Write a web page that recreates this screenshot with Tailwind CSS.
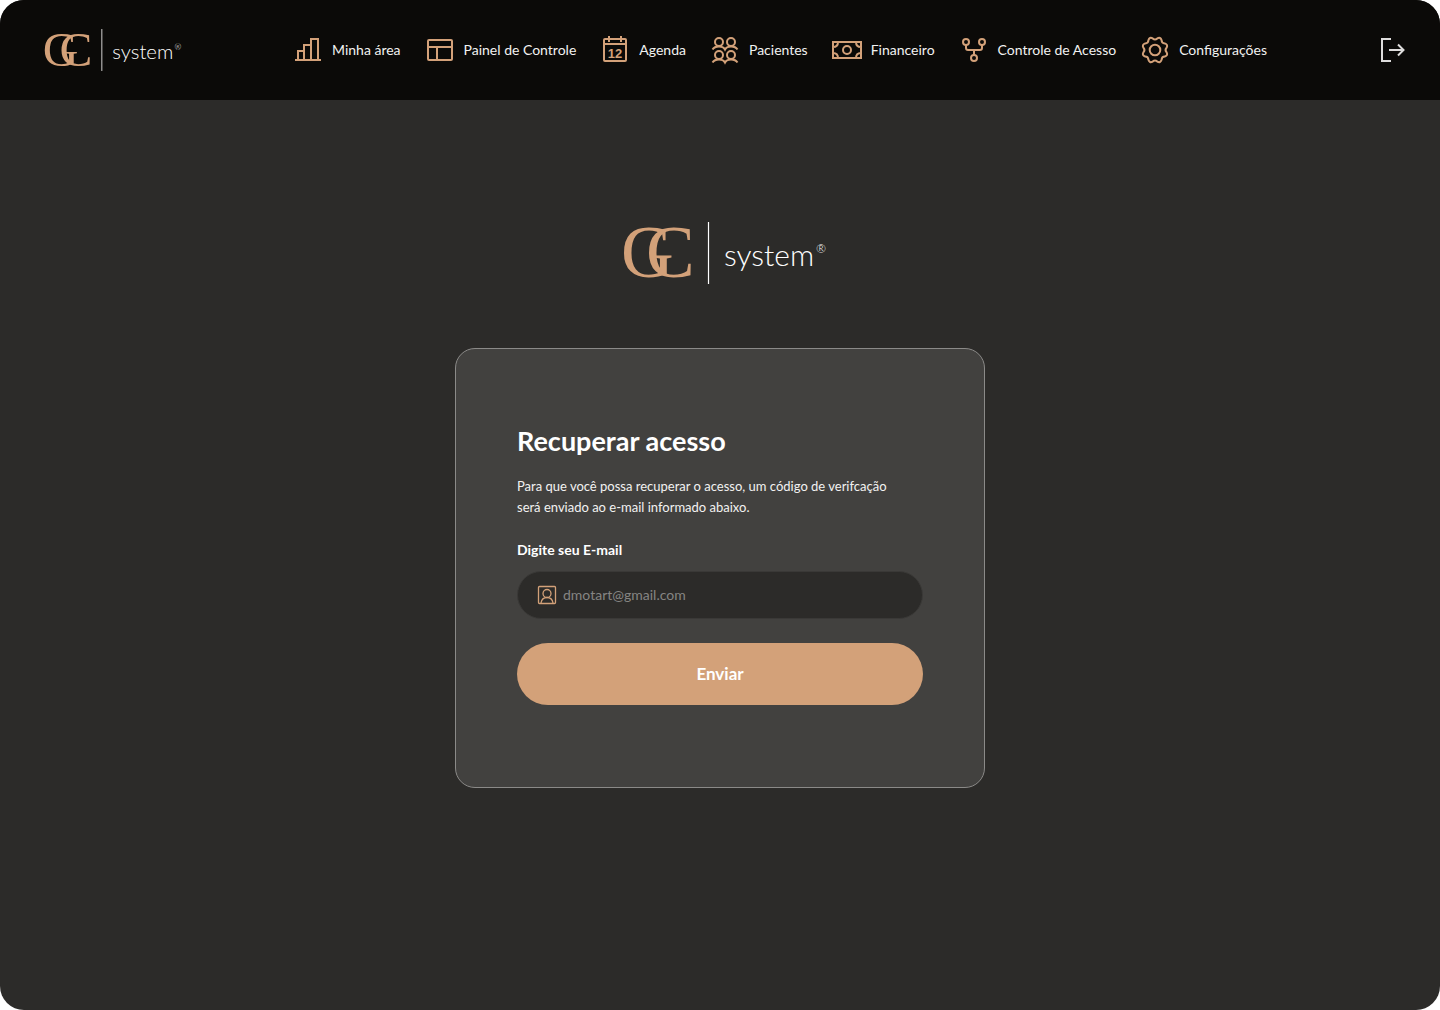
<!DOCTYPE html>
<html lang="pt-BR">
<head>
<meta charset="utf-8">
<meta name="viewport" content="width=device-width, initial-scale=1">
<title>GC system – Recuperar acesso</title>
<script src="https://cdn.jsdelivr.net/npm/@tailwindcss/browser@4"></script>
</head>
<body class="bg-white font-['Lato',sans-serif] text-white">
<svg class="hidden" aria-hidden="true">
  <symbol id="logo" viewBox="0 0 204 62">
    <g fill="#d3a179" font-family="Liberation Serif, serif" font-size="73">
      <text x="-2" y="55">G</text>
      <text x="23" y="55">C</text>
    </g>
    <path d="M85.500 0v62" stroke="#fff" stroke-width="1.200"/>
    <g fill="#fff" font-family="Lato, sans-serif" font-weight="300">
      <text x="101" y="44" font-size="30">system</text>
      <text x="193" y="31" font-size="12">®</text>
    </g>
  </symbol>
</svg>
<div class="flex min-h-screen flex-col overflow-hidden rounded-3xl bg-[#2c2b29]">
  <header class="flex h-[100px] items-center justify-between bg-[#0b0a08] pr-8 pl-11">
    <a href="#" aria-label="GC system"><svg class="h-[42px] w-[138px]"><use href="#logo"/></svg></a>
    <nav class="flex items-center gap-6 text-sm whitespace-nowrap text-[#f2f2f1]">
      <a href="#" class="flex items-center gap-[9px]">
        <svg class="size-[30px]" viewBox="0 0 30 30" fill="none" stroke="#d3a179" stroke-width="2"><path d="M2 25h26M5 25V16h6M11 25V10h6M18 25V4h7v21"/></svg>Minha área</a>
      <a href="#" class="flex items-center gap-[9px]">
        <svg class="size-[30px]" viewBox="0 0 30 30" fill="none" stroke="#d3a179" stroke-width="2"><rect x="3" y="5" width="24" height="20" rx="1"/><path d="M3 12h24M12 12v13"/></svg>Painel de Controle</a>
      <a href="#" class="flex items-center gap-[9px]">
        <svg class="size-[30px]" viewBox="0 0 30 30" fill="none" stroke="#d3a179" stroke-width="2"><rect x="4" y="4" width="22" height="22" rx="1"/><path d="M4 9h22M9 1v6M21 1v6"/><text x="15" y="23" text-anchor="middle" font-family="Liberation Sans, sans-serif" font-size="13" font-weight="700" fill="#d3a179" stroke="none">12</text></svg>Agenda</a>
      <a href="#" class="flex items-center gap-[9px]">
        <svg class="size-[30px]" viewBox="0 0 30 30" fill="none" stroke="#d3a179" stroke-width="2"><circle cx="9" cy="7" r="4"/><circle cx="21" cy="7" r="4"/><circle cx="9" cy="20" r="4"/><circle cx="21" cy="20" r="4"/><path d="M2.500 14.500C4 12 6 11.500 9 11.500s5 1 6 3c1-2 3-3 6-3s5 .5 6.500 3M2.500 27.500C4 25 6 24.500 9 24.500s5 1 6 3c1-2 3-3 6-3s5 .5 6.500 3"/></svg>Pacientes</a>
      <a href="#" class="flex items-center gap-[9px]">
        <svg class="size-[30px]" viewBox="0 0 30 30" fill="none" stroke="#d3a179" stroke-width="2"><path d="M1 7h28v16H1zM1 12c3 0 5-2 5-5M29 12c-3 0-5-2-5-5M1 18c3 0 5 2 5 5M29 18c-3 0-5 2-5 5"/><circle cx="15" cy="15" r="4"/></svg>Financeiro</a>
      <a href="#" class="flex items-center gap-[9px]">
        <svg class="size-[30px]" viewBox="0 0 30 30" fill="none" stroke="#d3a179" stroke-width="2"><circle cx="7" cy="7" r="3"/><circle cx="23" cy="7" r="3"/><circle cx="15" cy="23" r="3"/><path d="M7 10v3q0 2 2 2h12q2 0 2-2v-3M15 15v5"/></svg>Controle de Acesso</a>
      <a href="#" class="flex items-center gap-[9px]">
        <svg class="size-[30px]" viewBox="0 0 30 30" fill="none" stroke="#d3a179" stroke-width="2" stroke-linejoin="round"><circle cx="15" cy="15" r="5.300"/><path d="M12.700 3.400Q15 5.500 17.300 3.400Q20.500 1.700 21.600 5.200Q21.700 8.300 24.800 8.400Q28.300 9.500 26.600 12.700Q24.500 15 26.600 17.300Q28.300 20.500 24.800 21.600Q21.700 21.700 21.600 24.800Q20.500 28.300 17.300 26.600Q15 24.500 12.700 26.600Q9.500 28.300 8.400 24.800Q8.300 21.700 5.200 21.600Q1.700 20.500 3.400 17.300Q5.500 15 3.400 12.700Q1.700 9.500 5.200 8.400Q8.300 8.300 8.400 5.200Q9.500 1.700 12.700 3.400Z"/></svg>Configurações</a>
    </nav>
    <button type="button" aria-label="Sair" class="size-[30px]">
      <svg class="size-[30px]" viewBox="0 0 30 30" fill="none" stroke="#dedddc" stroke-width="2"><path d="M13 4H4v22h9M11 15h15M20 9.500l5.500 5.500-5.500 5.500"/></svg>
    </button>
  </header>
  <main class="flex flex-1 flex-col items-center gap-16 pt-[122px] pb-16">
    <svg class="ml-[10px] h-[62px] w-[204px]" role="img" aria-label="GC system"><use href="#logo"/></svg>
    <form class="flex w-full max-w-[530px] flex-col rounded-[20px] border border-[#8b8a88] bg-[#42413f] px-[61px] pt-[74px] pb-[82px]">
      <h1 class="text-[27px] leading-9 font-bold">Recuperar acesso</h1>
      <p class="mt-[17px] text-[13px] leading-[21px] text-[#f2f2f1]">Para que você possa recuperar o acesso, um código de verifcação<br>será enviado ao e-mail informado abaixo.</p>
      <label for="email" class="mt-5 text-sm leading-6 font-bold">Digite seu E-mail</label>
      <div class="mt-[9px] flex h-12 items-center gap-[5px] rounded-full border border-[#3a3937] bg-[#2c2b29] px-[18px]">
        <svg class="size-[22px] shrink-0" viewBox="0 0 22 22" fill="none" stroke="#d3a179" stroke-width="1.300"><rect x="2.500" y="2.500" width="17" height="17" rx="1"/><circle cx="11" cy="9.500" r="4"/><path d="M5 19c.5-3.500 3-5.500 6-5.500s5.500 2 6 5.500"/></svg>
        <input id="email" type="email" placeholder="dmotart@gmail.com" class="min-w-0 flex-1 bg-transparent text-sm outline-none placeholder:text-[#868583]">
      </div>
      <button type="submit" class="mt-6 h-[62px] rounded-full bg-[#d3a179] text-[17px] font-bold">Enviar</button>
    </form>
  </main>
</div>
</body>
</html>
